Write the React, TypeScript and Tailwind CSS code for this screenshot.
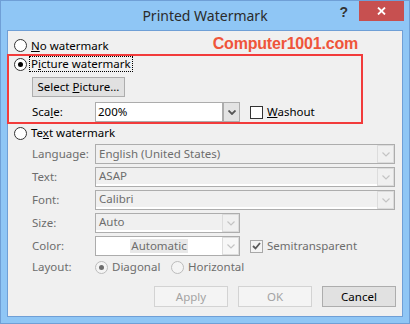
import React from "react";

// small chevron used by the combo boxes
function Chevron({ disabled }: { disabled?: boolean }) {
  return (
    <svg width="8" height="5" viewBox="0 0 8 5">
      <polyline
        points="0.5,0.5 4,4 7.5,0.5"
        fill="none"
        stroke={disabled ? "#c4c4c4" : "#555"}
        strokeWidth={disabled ? 1.2 : 1.8}
      />
    </svg>
  );
}

function Radio({ checked, disabled }: { checked?: boolean; disabled?: boolean }) {
  return (
    <span
      className={`w-[13px] h-[13px] shrink-0 rounded-full border flex items-center justify-center ${
        disabled ? "border-[#bcbcbc] bg-[#f4f4f4]" : "border-[#333] bg-white"
      }`}
    >
      {checked && (
        <span className={`w-[5px] h-[5px] rounded-full ${disabled ? "bg-[#6d6d6d]" : "bg-black"}`} />
      )}
    </span>
  );
}

function Checkbox({ checked, disabled }: { checked?: boolean; disabled?: boolean }) {
  return (
    <span
      className={`w-[13px] h-[13px] shrink-0 border flex items-center justify-center ${
        disabled ? "border-[#a8a8a8] bg-[#f4f4f4]" : "border-[#333] bg-white"
      }`}
    >
      {checked && (
        <svg width="9" height="8" viewBox="0 0 9 8">
          <polyline points="1,4 3.5,6.5 8,1" fill="none" stroke="#5a5a5a" strokeWidth="1.8" />
        </svg>
      )}
    </span>
  );
}

function DisabledCombo({ value, wide, whiteEdge }: { value: string; wide?: boolean; whiteEdge?: boolean }) {
  return (
    <div className={`${wide ? "w-[300px]" : "w-[145px]"} h-[20px] border border-[#adadad] bg-[#f0f0f0] flex`}>
      <div className={`flex-1 pl-[3px] flex items-center text-[#6d6d6d] ${whiteEdge ? "border-b-2 border-white" : ""}`}>
        {value}
      </div>
      <div className="w-[17px] border border-[#dcdcdc] flex items-center justify-center">
        <Chevron disabled />
      </div>
    </div>
  );
}

export default function App() {
  return (
    <div className="w-[410px] h-[324px] bg-[#8fc6f5] border border-[#6f9fd6] flex flex-col font-['Noto_Sans',sans-serif] text-[11.5px] text-black">
      {/* Title bar */}
      <div className="h-[29px] grid grid-cols-[1fr_auto_1fr] shrink-0">
        <div />
        <div className="flex items-center pb-[1px] text-[14px] text-[#2b2b2b]">Printed Watermark</div>
        <div className="flex justify-end items-start">
          <span className="mt-[3px] mr-[11px] font-['Liberation_Sans',sans-serif] font-bold text-[14px] text-[#333] leading-[16px]">
            ?
          </span>
          <div className="w-[45px] h-[20px] mr-[5px] bg-[#c75050] flex items-center justify-center">
            <svg width="9" height="8" viewBox="0 0 9 8">
              <path d="M1 0.5 L8 7.5 M8 0.5 L1 7.5" stroke="#fff" strokeWidth="1.8" />
            </svg>
          </div>
        </div>
      </div>

      {/* Client area */}
      <div className="flex-1 mx-[6px] mb-[6px] border border-[#6f9fd6] bg-[#f0f0f0] flex flex-col">
        <div className="mt-[6px] h-[17px] flex items-center pl-[6px]">
          <Radio />
          <span className="ml-[4px]">
            <u>N</u>o watermark
          </span>
          <span className="ml-auto mr-[44px] mb-[3px] font-['Liberation_Sans',sans-serif] font-bold text-[16px] leading-[16px] tracking-[-0.2px] text-[#ef553a]">
            Computer1001.com
          </span>
        </div>

        {/* highlighted group */}
        <div className="ml-[-1px] w-[356px] h-[70px] border-2 border-[#f23b3b] flex flex-col">
          <div className="h-[16px] flex items-center pl-[5px]">
            <Radio checked />
            <span className="ml-[2px] h-full px-[1px] border border-dotted border-black flex items-center">
              <span>
                P<u>i</u>cture watermark
              </span>
            </span>
          </div>
          <button className="mt-[5px] ml-[23px] w-[93px] h-[20px] bg-[#e1e1e1] border border-[#adadad] flex items-center justify-center">
            <span>
              Select <u>P</u>icture...
            </span>
          </button>
          <div className="mt-[5px] h-[20px] flex items-center pl-[23px]">
            <span className="w-[63px]">
              Sca<u>l</u>e:
            </span>
            <div className="w-[145px] h-[20px] border border-[#acacac] bg-white flex">
              <div className="flex-1 pl-[2px] flex items-center">200%</div>
              <div className="w-[17px] bg-[#e3e3e3] border-l-2 border-[#acacac] flex items-center justify-center">
                <Chevron />
              </div>
            </div>
            <span className="ml-[10px]">
              <Checkbox />
            </span>
            <span className="ml-[4px]">
              <u>W</u>ashout
            </span>
          </div>
        </div>

        <div className="mt-[1px] h-[16px] flex items-center pl-[6px]">
          <Radio />
          <span className="ml-[4px]">
            Te<u>x</u>t watermark
          </span>
        </div>

        <div className="mt-[3px] pl-[24px] flex flex-col gap-[3px] text-[#6d6d6d]">
          <div className="flex items-center">
            <span className="w-[63px]">Language:</span>
            <DisabledCombo value="English (United States)" wide />
          </div>
          <div className="flex items-center">
            <span className="w-[63px]">Text:</span>
            <DisabledCombo value="ASAP" wide whiteEdge />
          </div>
          <div className="flex items-center">
            <span className="w-[63px]">Font:</span>
            <DisabledCombo value="Calibri" wide whiteEdge />
          </div>
          <div className="flex items-center">
            <span className="w-[63px]">Size:</span>
            <DisabledCombo value="Auto" whiteEdge />
          </div>
          <div className="flex items-center">
            <span className="w-[63px]">Color:</span>
            <div className="w-[145px] h-[20px] border border-[#acacac] bg-white flex">
              <div className="flex-1 flex items-center justify-center">
                <span className="bg-[#e8e8e8] px-[1px] leading-[14px]">Automatic</span>
              </div>
              <div className="w-[17px] border border-[#dcdcdc] bg-[#f7f7f7] flex items-center justify-center">
                <Chevron disabled />
              </div>
            </div>
            <span className="ml-[10px]">
              <Checkbox checked disabled />
            </span>
            <span className="ml-[4px]">Semitransparent</span>
          </div>
          <div className="mt-[-1px] h-[18px] flex items-center">
            <span className="w-[63px]">Layout:</span>
            <div className="w-[76px] flex items-center">
              <Radio checked disabled />
              <span className="ml-[4px]">Diagonal</span>
            </div>
            <Radio disabled />
            <span className="ml-[4px]">Horizontal</span>
          </div>
        </div>

        <div className="mt-[10px] pr-[6px] flex justify-end gap-[10px]">
          <button className="w-[74px] h-[21px] bg-[#f4f4f4] border border-[#d3d3d3] text-[#a3a3a3]">Apply</button>
          <button className="w-[74px] h-[21px] bg-[#f4f4f4] border border-[#d3d3d3] text-[#a3a3a3]">OK</button>
          <button className="w-[74px] h-[21px] bg-[#e1e1e1] border border-[#adadad]">Cancel</button>
        </div>
      </div>
    </div>
  );
}
